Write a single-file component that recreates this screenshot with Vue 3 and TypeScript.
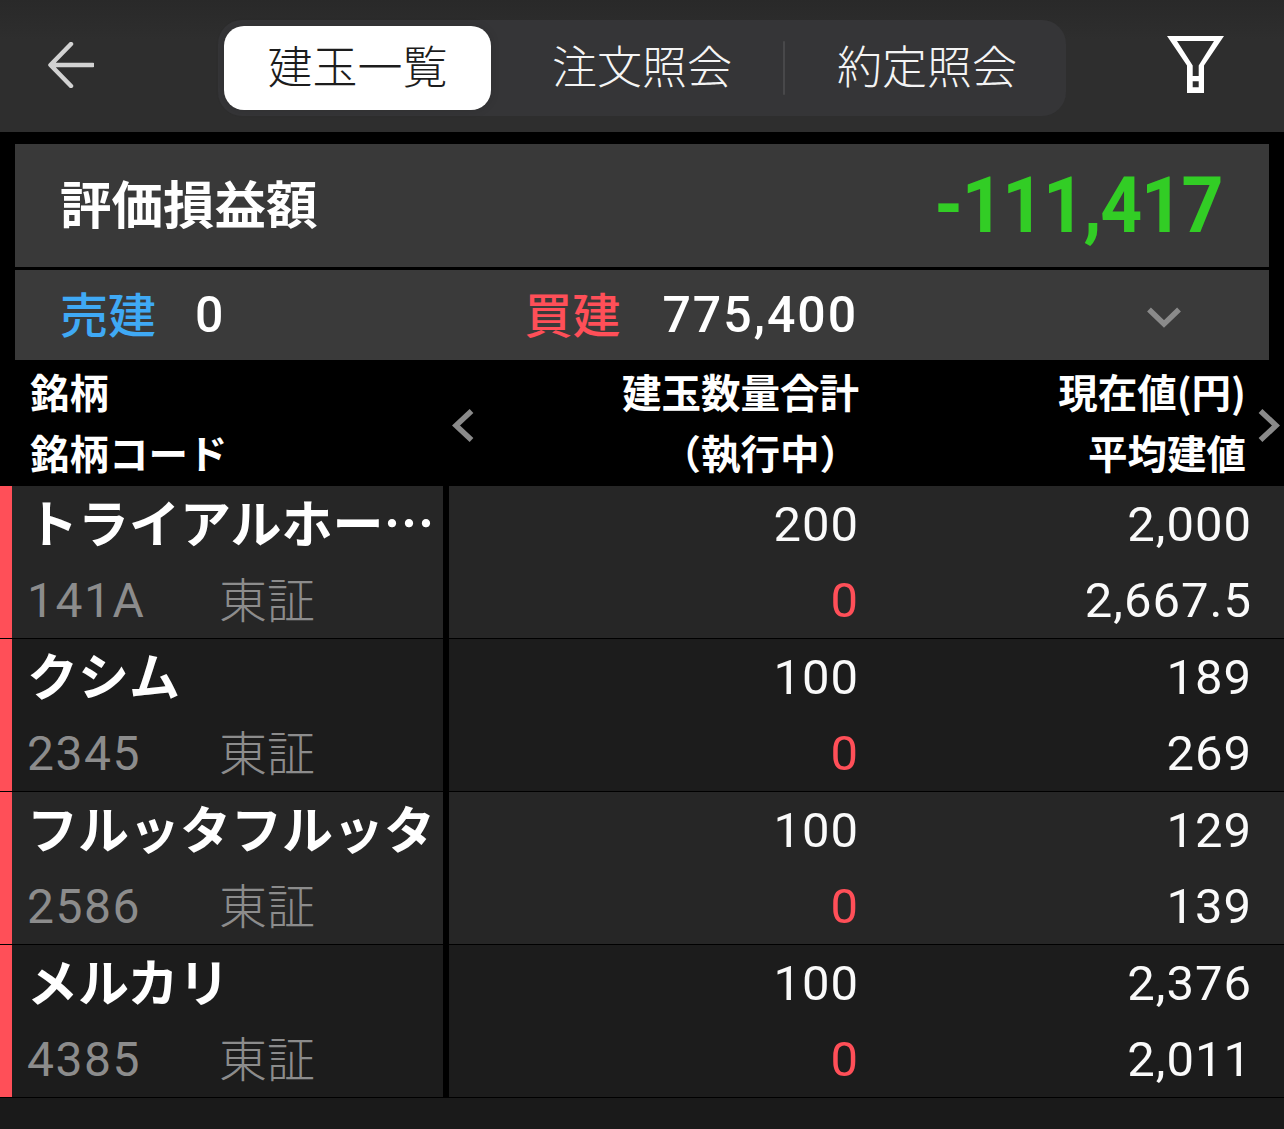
<script setup lang="ts">
interface Position {
  name: string
  code: string
  market: string
  qty: string
  pending: string
  price: string
  average: string
}

const tabs = ['建玉一覧', '注文照会', '約定照会']

const positions: Position[] = [
  { name: 'トライアルホー…', code: '141A', market: '東証', qty: '200', pending: '0', price: '2,000', average: '2,667.5' },
  { name: 'クシム', code: '2345', market: '東証', qty: '100', pending: '0', price: '189', average: '269' },
  { name: 'フルッタフルッタ', code: '2586', market: '東証', qty: '100', pending: '0', price: '129', average: '139' },
  { name: 'メルカリ', code: '4385', market: '東証', qty: '100', pending: '0', price: '2,376', average: '2,011' }
]
</script>

<template>
  <div class="page">
    <header class="topbar">
      <svg class="back" width="46" height="46" viewBox="0 0 46 46" fill="none" stroke="#d2d2d2" stroke-width="4.5" stroke-linecap="round" stroke-linejoin="round">
        <path d="M45 23H3M23 2 2.5 23 23 44" />
      </svg>
      <nav class="tabs">
        <template v-for="(tab, i) in tabs" :key="tab">
          <span v-if="i === 2" class="tabs__sep" />
          <div class="tab" :class="{ 'tab--active': i === 0, 'tab--last': i === 2 }">{{ tab }}</div>
        </template>
      </nav>
      <svg class="filter" width="57" height="58" viewBox="0 0 57 58" fill="#fff" fill-rule="evenodd">
        <path d="M0 0H57L37 29.5V57H20V29.5ZM10 5 25.7 29.5V40H31.7V29.5L47 5ZM25.7 45.3V51.3H31.7V45.3Z" />
      </svg>
    </header>

    <section class="summary">
      <div class="summary__total">
        <span class="summary__label">評価損益額</span>
        <span class="summary__value">-111,417</span>
      </div>
      <div class="summary__split">
        <span class="split__label split__label--sell">売建</span>
        <span class="split__num split__num--sell">0</span>
        <span class="split__label split__label--buy">買建</span>
        <span class="split__num split__num--buy">775,400</span>
        <svg class="split__chevron" width="34" height="21" viewBox="0 0 34 21" fill="none" stroke="#8a8a8a" stroke-width="5.5">
          <path d="M2 2.5 17 17 32 2.5" />
        </svg>
      </div>
    </section>

    <div class="table-head">
      <div class="table-head__name">
        <div>銘柄</div>
        <div>銘柄コード</div>
      </div>
      <div class="table-head__qty">
        <div>建玉数量合計</div>
        <div class="table-head__paren">（執行中）</div>
      </div>
      <div class="table-head__price">
        <div>現在値(円)</div>
        <div>平均建値</div>
      </div>
      <svg class="pager pager--left" width="22" height="33" viewBox="0 0 22 33" fill="none" stroke="#8a8a8a" stroke-width="5.5">
        <path d="M19.5 2 4 16.5 19.5 31" />
      </svg>
      <svg class="pager pager--right" width="22" height="33" viewBox="0 0 22 33" fill="none" stroke="#8a8a8a" stroke-width="5.5">
        <path d="M2.5 2 18 16.5 2.5 31" />
      </svg>
    </div>

    <div
      v-for="(p, i) in positions"
      :key="p.code"
      class="row"
      :class="{ 'row--dark': i % 2 === 1 }"
    >
      <div class="row__strip" />
      <div class="row__name">
        <div class="row__title">{{ p.name }}</div>
        <div class="row__meta">
          <span class="row__code">{{ p.code }}</span>
          <span class="row__market">{{ p.market }}</span>
        </div>
      </div>
      <div class="row__gap" />
      <div class="row__cell row__cell--qty">
        <div>{{ p.qty }}</div>
        <div class="row__pending">{{ p.pending }}</div>
      </div>
      <div class="row__cell row__cell--price">
        <div>{{ p.price }}</div>
        <div>{{ p.average }}</div>
      </div>
    </div>
  </div>
</template>

<style>
html, body {
  margin: 0;
  background: #1a1a1a;
}
</style>

<style scoped>
.page {
  width: 1284px;
  height: 1129px;
  overflow: hidden;
  background: #1a1a1a;
  color: #fff;
  font-family: "Noto Sans CJK JP", "Noto Sans", sans-serif;
}

.topbar {
  display: flex;
  align-items: center;
  box-sizing: border-box;
  height: 132px;
  padding: 4px 60px 0 48px;
  background: linear-gradient(#292929, #2e2e2e 30%);
}

.back, .filter {
  flex: none;
  margin-bottom: 6px;
}

.filter {
  margin-left: auto;
}

.tabs {
  display: flex;
  align-items: center;
  box-sizing: border-box;
  width: 848px;
  height: 96px;
  margin-left: 124px;
  padding: 6px 0 6px 6px;
  border-radius: 24px;
  background: #353537;
}

.tab {
  flex: 0 0 282px;
  text-align: center;
  margin-left: 10px;
  font-size: 45px;
  line-height: 78px;
  padding-bottom: 6px;
  color: #f4f4f4;
  font-weight: 300;
}

.tab--active {
  flex: 0 0 267px;
  margin-left: 0;
  border-radius: 20px;
  background: #fff;
  color: #1c1c1c;
  box-shadow: 0 0 10px rgba(0, 0, 0, 0.12);
}

.tab--last {
  flex: 1;
  margin-left: 0;
  padding-left: 3px;
}

.tabs__sep {
  flex: none;
  width: 2px;
  height: 54px;
  border-radius: 1px;
  background: #48484a;
}

.summary {
  padding: 12px 15px 0;
  background: #000;
}

.summary__total {
  display: flex;
  align-items: center;
  justify-content: space-between;
  box-sizing: border-box;
  height: 123px;
  padding: 0 47px 0 45px;
  background: #393939;
}

.summary__label {
  font-size: 51.5px;
  font-weight: 700;
  line-height: 60px;
  padding-bottom: 8px;
}

.summary__value {
  font-family: Roboto, sans-serif;
  font-size: 77px;
  font-weight: 700;
  letter-spacing: -1.4px;
  color: #32cd25;
  transform: scaleX(0.95);
  transform-origin: right center;
}

.summary__split {
  display: flex;
  align-items: center;
  box-sizing: border-box;
  height: 90px;
  margin-top: 3px;
  padding: 0 45px;
  background: #3a3a3a;
}

.split__label {
  font-size: 48px;
  font-weight: 500;
  line-height: 60px;
  padding-bottom: 6px;
}

.split__label--sell {
  color: #3fa9f5;
}

.split__label--buy {
  margin-left: 299px;
  color: #ff4f58;
}

.split__num {
  margin-left: 39px;
  font-family: Roboto, sans-serif;
  font-size: 50px;
  font-weight: 500;
  letter-spacing: 2px;
}

.split__num--buy {
  margin-left: 42px;
}

.split__chevron {
  margin: 4px 43px 0 auto;
}

.table-head {
  display: grid;
  position: relative;
  grid-template-columns: 449px 410px 387px;
  height: 126px;
  background: #000;
  font-size: 39.5px;
  font-weight: 700;
  line-height: 61px;
}

.table-head__name {
  padding-left: 30px;
}

.table-head__qty, .table-head__price {
  text-align: right;
}

.pager {
  position: absolute;
  top: 49px;
}

.pager--left {
  left: 452px;
}

.pager--right {
  left: 1258px;
}

.row {
  display: flex;
  box-sizing: border-box;
  height: 153px;
  background: #262626;
  border-bottom: 1px solid #000;
}

.row--dark {
  background: #1c1c1c;
}

.row__strip {
  flex: 0 0 12px;
  background: #ff4f58;
}

.row__name {
  flex: 0 0 431px;
  box-sizing: border-box;
  padding-left: 15px;
}

.row__title {
  white-space: nowrap;
  font-size: 51px;
  font-weight: 700;
  line-height: 70px;
  margin-bottom: 6px;
}

.row__meta {
  display: flex;
  align-items: flex-start;
}

.row__code {
  flex: 0 0 192px;
  font-family: Roboto, sans-serif;
  font-size: 48px;
  letter-spacing: 1.5px;
  line-height: 78px;
  color: #8c8c8c;
}

.row__market {
  font-size: 48px;
  font-weight: 300;
  line-height: 70px;
  color: #8c8c8c;
}

.row__cell {
  box-sizing: border-box;
  padding-top: 1px;
  text-align: right;
  font-family: Roboto, sans-serif;
  font-size: 49px;
  letter-spacing: 1px;
  line-height: 76px;
  color: #fafafa;
}

.row__gap {
  flex: 0 0 6px;
  background: #000;
}

.row__cell--qty {
  flex: 0 0 410px;
}

.row__cell--price {
  flex: 0 0 393px;
}

.row__pending {
  color: #ff4f58;
}
</style>
